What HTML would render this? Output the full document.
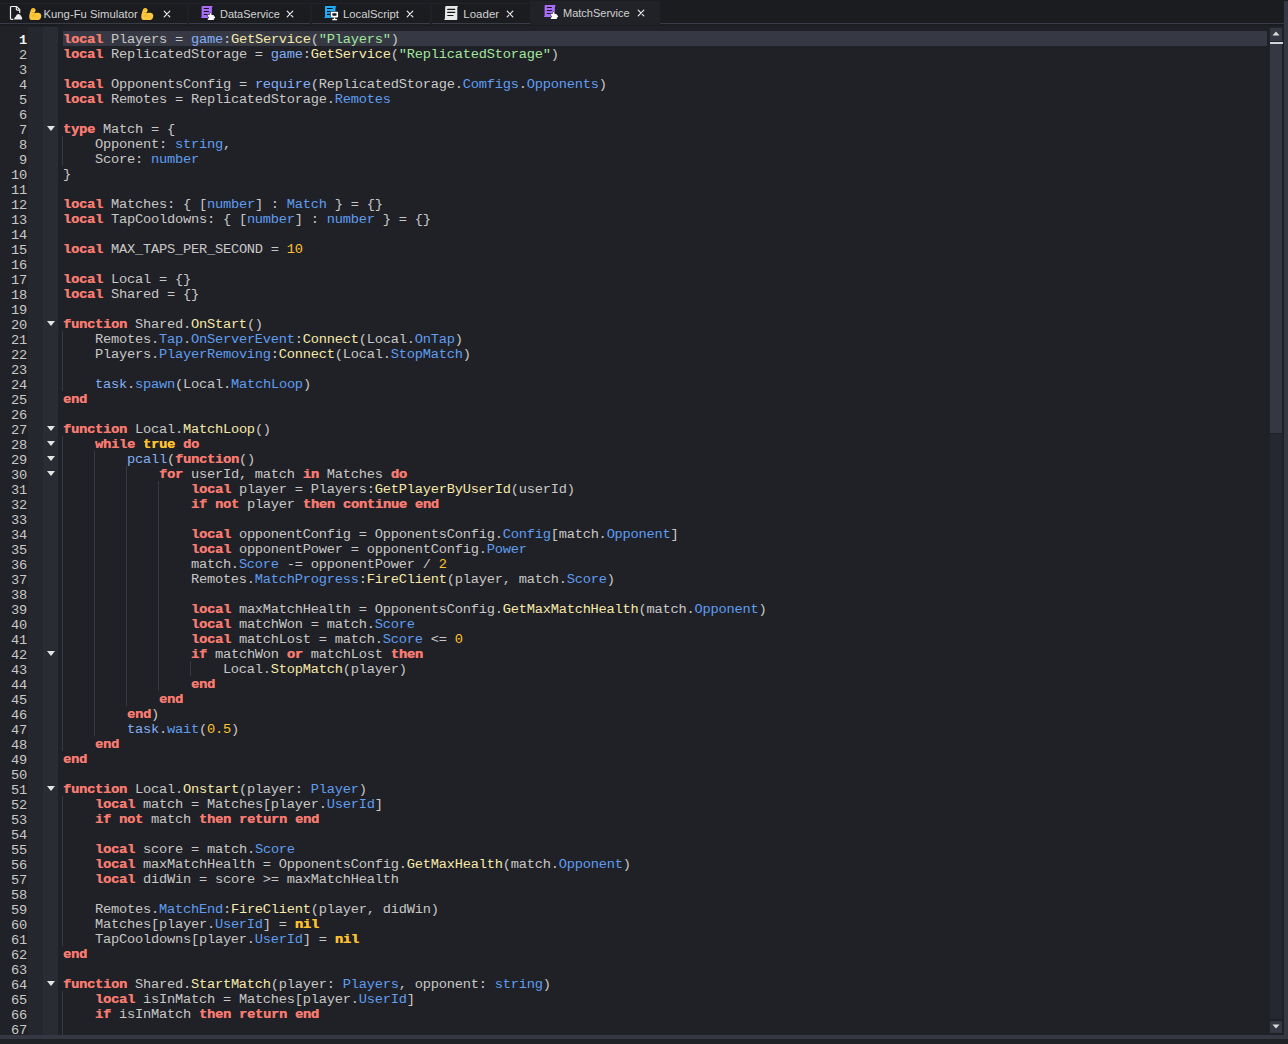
<!DOCTYPE html>
<html><head><meta charset="utf-8">
<style>
*{margin:0;padding:0;box-sizing:border-box}
html,body{width:1288px;height:1044px;overflow:hidden;background:#202126}
body{position:relative;font-family:"Liberation Sans",sans-serif}
#tabs{position:absolute;left:0;top:0;width:1288px;height:24px;background:#1b1c20}
.tab{position:absolute;top:3px;height:21px;border-top:1px solid #222328;border-bottom:1px solid #393b46;background:#1b1c20}
.sep{position:absolute;top:3px;width:2px;height:22px;background:#202127}
.tab.act{top:1px;height:24px;background:#212228;border:none}
.tt{position:absolute;top:4px;font-size:12px;color:#d2d2d2;white-space:nowrap;line-height:14px}
.cl{position:absolute;width:8px;height:8px}
.ic{position:absolute}
#tabline{position:absolute;left:660px;top:23px;width:624px;height:1px;background:#393b46}
#redge{position:absolute;left:1284px;top:1px;width:4px;height:1038px;background:#353842}
#bedge{position:absolute;left:0;top:1035px;width:1288px;height:4px;background:#353842}
#g1{position:absolute;left:0;top:27px;width:28px;height:1008px;background:#212227}
#g2{position:absolute;left:28px;top:27px;width:15px;height:1008px;background:#25272e}
#g3{position:absolute;left:43px;top:27px;width:15px;height:1008px;background:#2a2c33}
#hl{position:absolute;left:63px;top:31px;width:1204px;height:15px;background:#363944}
.num{position:absolute;left:0;width:27px;text-align:right;font-family:"Liberation Mono",monospace;font-size:13.7px;letter-spacing:-0.22px;line-height:15px;color:#c8c8c8}
.num.cur{color:#f2f2f2;font-weight:bold}
.ln{position:absolute;left:63px;font-family:"Liberation Mono",monospace;font-size:13.7px;letter-spacing:-0.22px;line-height:15px;color:#c8c8c8;white-space:pre}
.ln i{font-style:normal}
.kw{color:#f67a70;font-weight:bold;text-shadow:0.35px 0 0 #f67a70}
.bi{color:#84aef7}
.me{color:#f6eaaa}
.pr{color:#5f9df1}
.st{color:#a2e69e}
.nu{color:#fec22e}
.bo{color:#fec22e;font-weight:bold;text-shadow:0.35px 0 0 #fec22e}
.fold{position:absolute;left:46.5px;width:0;height:0;border-left:4px solid transparent;border-right:4px solid transparent;border-top:5px solid #e4e4e4}
.guide{position:absolute;width:1px;background:#383a42}
#sb{position:absolute;left:1270px;top:28px;width:12px;height:1005px}
#sbup{position:absolute;left:0;top:0;width:12px;height:13px;background:#353842}
#sbthumb{position:absolute;left:0;top:14px;width:12px;height:391px;background:#353842}
#sbmark{position:absolute;left:0;top:14px;width:13px;height:2px;background:#d0d3dc}
#sbtrack{position:absolute;left:0;top:406px;width:12px;height:585px;background:#252831}
#sbdn{position:absolute;left:0;top:993px;width:12px;height:12px;background:#353842}
</style></head><body>
<div id="strip" style="position:absolute;left:0;top:24px;width:1284px;height:2px;background:#1b1c20"></div>
<div id="tabs">
  <div class="tab" style="left:0;width:187px"></div>
  <div class="sep" style="left:187px"></div>
  <div class="tab" style="left:189px;width:121px"></div>
  <div class="sep" style="left:310px"></div>
  <div class="tab" style="left:312px;width:118px"></div>
  <div class="sep" style="left:430px"></div>
  <div class="tab" style="left:432px;width:98px"></div>
  <div class="tab act" style="left:530px;width:130px"></div>
  <div id="tabline"></div>

  
  <svg class="ic" style="left:7px;top:3px" width="18" height="18" viewBox="0 0 18 18"><path d="M6.3 16.4 H4.6 Q3.5 16.4 3.5 15.3 V4.6 Q3.5 3.5 4.6 3.5 H9.6 L12.7 6.6 V9.9" fill="none" stroke="#f2f2f2" stroke-width="1.2"/><path d="M9.3 3.7 V5.9 Q9.3 7.1 10.5 7.1 H12.6" fill="none" stroke="#f2f2f2" stroke-width="1.1"/><path d="M7.1 16.5 Q7 14.3 8.6 13.7 Q9.4 11 11.4 11 Q13.5 11 14.1 13.2 Q15.1 13.9 15.1 15.2 V16.5 Z" fill="#ececec"/></svg>
<svg class="ic" style="left:26px;top:5px" width="18" height="18" viewBox="0 0 18 18"><path d="M5.4 3.8 Q6.4 2.8 7.6 3 Q9.4 3.4 9.7 5 Q9.6 6.2 8.6 7.4 L8.2 8.4 Q9 7.8 10.2 7.8 H12.6 Q15 7.9 15.3 10.6 Q15.4 13.2 13.6 14.6 Q12.8 15.1 11.8 15.1 H5.4 Q3.6 15 3.3 12.8 Q3.1 10.6 3.6 9 Q4.2 6.2 5.4 3.8 Z" fill="#fcc93c"/><path d="M6.4 4.4 Q7 4.8 7.6 4.2 M5.8 7.4 Q6.8 8 7.8 7.3 M6.2 11.6 L7.6 10.2 L9 11.6" stroke="#e39a1e" stroke-width="0.8" fill="none"/></svg>
<div class="tt" style="left:43.5px;top:7px;font-size:11.3px;letter-spacing:0px">Kung-Fu Simulator</div>
<svg class="ic" style="left:137.5px;top:5px" width="18" height="18" viewBox="0 0 18 18"><path d="M5.4 3.8 Q6.4 2.8 7.6 3 Q9.4 3.4 9.7 5 Q9.6 6.2 8.6 7.4 L8.2 8.4 Q9 7.8 10.2 7.8 H12.6 Q15 7.9 15.3 10.6 Q15.4 13.2 13.6 14.6 Q12.8 15.1 11.8 15.1 H5.4 Q3.6 15 3.3 12.8 Q3.1 10.6 3.6 9 Q4.2 6.2 5.4 3.8 Z" fill="#fcc93c"/><path d="M6.4 4.4 Q7 4.8 7.6 4.2 M5.8 7.4 Q6.8 8 7.8 7.3 M6.2 11.6 L7.6 10.2 L9 11.6" stroke="#e39a1e" stroke-width="0.8" fill="none"/></svg>
<svg class="ic" style="left:162px;top:9px" width="10" height="10" viewBox="0 0 10 10"><path d="M2.2 2.2 L7.8 7.8 M7.8 2.2 L2.2 7.8" stroke="#ececec" stroke-width="1.2" stroke-linecap="round"/></svg>
<svg class="ic" style="left:198px;top:3px" width="20" height="20" viewBox="0 0 20 20"><path d="M3.6 3.8 Q3.6 2.9 4.6 2.9 H14.9 L13.9 4.6 V14.9 H2.8 L3.6 13.8 Z" fill="#a86cf8"/><path d="M5.8 5.5 H10.9 M5.8 8.45 H10.9 M5.8 11.5 H9.4" stroke="#15161a" stroke-width="1.1"/><path d="M9.8 12 H11.6 Q11.3 10 12.6 10 Q13.9 10 13.6 12 H15.8 V13.4 Q17.1 13.2 17.1 14.4 Q17.1 15.6 15.8 15.4 V17 H9.8 V15.4 Q11 15.5 11 14.4 Q11 13.3 9.8 13.4 Z" fill="#ffffff" stroke="#15161a" stroke-width="1" paint-order="stroke"/></svg>
<div class="tt" style="left:220px;top:7px;font-size:11px;letter-spacing:0px">DataService</div>
<svg class="ic" style="left:285px;top:9px" width="10" height="10" viewBox="0 0 10 10"><path d="M2.2 2.2 L7.8 7.8 M7.8 2.2 L2.2 7.8" stroke="#ececec" stroke-width="1.2" stroke-linecap="round"/></svg>
<svg class="ic" style="left:321px;top:3px" width="20" height="20" viewBox="0 0 20 20"><path d="M4 3.8 Q4 2.9 5 2.9 H15.5 L14.5 4.6 V14.9 H3 L4 13.8 Z" fill="#22a8f5"/><path d="M6 5.5 H11.6 M6 8.45 H9.5 M6 11.4 H9.5" stroke="#15161a" stroke-width="1.1"/><rect x="9.8" y="8.8" width="7.3" height="5.8" rx="1" fill="#fff" stroke="#15161a" stroke-width="1" paint-order="stroke"/><rect x="11.3" y="10.3" width="4.3" height="2.4" rx="0.8" fill="#15161a"/><rect x="12.8" y="14.4" width="1.4" height="2" fill="#fff"/><rect x="11.2" y="16" width="5" height="1.2" rx="0.5" fill="#fff"/></svg>
<div class="tt" style="left:343px;top:7px;font-size:11.3px;letter-spacing:0px">LocalScript</div>
<svg class="ic" style="left:405px;top:9px" width="10" height="10" viewBox="0 0 10 10"><path d="M2.2 2.2 L7.8 7.8 M7.8 2.2 L2.2 7.8" stroke="#ececec" stroke-width="1.2" stroke-linecap="round"/></svg>
<svg class="ic" style="left:441px;top:3px" width="20" height="20" viewBox="0 0 20 20"><path d="M4.2 4 Q4.4 3 5.4 3 H17.1 L16.3 4.6 V16 Q16.3 16.9 15.5 16.9 H3 L3.9 15.8 Z" fill="#e8e8e8"/><path d="M6.7 6.4 H13.8 M6.7 9.4 H13.8 M6.7 12.5 H12" stroke="#15161a" stroke-width="1.1" stroke-linecap="round"/></svg>
<div class="tt" style="left:463.3px;top:7px;font-size:11.5px;letter-spacing:0px">Loader</div>
<svg class="ic" style="left:505px;top:9px" width="10" height="10" viewBox="0 0 10 10"><path d="M2.2 2.2 L7.8 7.8 M7.8 2.2 L2.2 7.8" stroke="#ececec" stroke-width="1.2" stroke-linecap="round"/></svg>
<svg class="ic" style="left:541px;top:2px" width="20" height="20" viewBox="0 0 20 20"><path d="M3.6 3.8 Q3.6 2.9 4.6 2.9 H14.9 L13.9 4.6 V14.9 H2.8 L3.6 13.8 Z" fill="#a86cf8"/><path d="M5.8 5.5 H10.9 M5.8 8.45 H10.9 M5.8 11.5 H9.4" stroke="#15161a" stroke-width="1.1"/><path d="M9.8 12 H11.6 Q11.3 10 12.6 10 Q13.9 10 13.6 12 H15.8 V13.4 Q17.1 13.2 17.1 14.4 Q17.1 15.6 15.8 15.4 V17 H9.8 V15.4 Q11 15.5 11 14.4 Q11 13.3 9.8 13.4 Z" fill="#ffffff" stroke="#15161a" stroke-width="1" paint-order="stroke"/></svg>
<div class="tt" style="left:563px;top:6px;font-size:11px;letter-spacing:0px">MatchService</div>
<svg class="ic" style="left:636px;top:8px" width="10" height="10" viewBox="0 0 10 10"><path d="M2.2 2.2 L7.8 7.8 M7.8 2.2 L2.2 7.8" stroke="#ececec" stroke-width="1.2" stroke-linecap="round"/></svg>
</div>
<div id="g1"></div><div id="g2"></div><div id="g3"></div>
<div id="hl"></div>
<div class="guide" style="left:62px;top:136px;height:30px"></div><div class="guide" style="left:62px;top:331px;height:60px"></div><div class="guide" style="left:62px;top:436px;height:315px"></div><div class="guide" style="left:94px;top:451px;height:285px"></div><div class="guide" style="left:126px;top:466px;height:240px"></div><div class="guide" style="left:158px;top:481px;height:210px"></div><div class="guide" style="left:190px;top:661px;height:15px"></div><div class="guide" style="left:62px;top:796px;height:150px"></div><div class="guide" style="left:62px;top:991px;height:45px"></div>
<div class="num cur" style="top:33px">1</div>
<div class="num" style="top:48px">2</div>
<div class="num" style="top:63px">3</div>
<div class="num" style="top:78px">4</div>
<div class="num" style="top:93px">5</div>
<div class="num" style="top:108px">6</div>
<div class="num" style="top:123px">7</div>
<div class="num" style="top:138px">8</div>
<div class="num" style="top:153px">9</div>
<div class="num" style="top:168px">10</div>
<div class="num" style="top:183px">11</div>
<div class="num" style="top:198px">12</div>
<div class="num" style="top:213px">13</div>
<div class="num" style="top:228px">14</div>
<div class="num" style="top:243px">15</div>
<div class="num" style="top:258px">16</div>
<div class="num" style="top:273px">17</div>
<div class="num" style="top:288px">18</div>
<div class="num" style="top:303px">19</div>
<div class="num" style="top:318px">20</div>
<div class="num" style="top:333px">21</div>
<div class="num" style="top:348px">22</div>
<div class="num" style="top:363px">23</div>
<div class="num" style="top:378px">24</div>
<div class="num" style="top:393px">25</div>
<div class="num" style="top:408px">26</div>
<div class="num" style="top:423px">27</div>
<div class="num" style="top:438px">28</div>
<div class="num" style="top:453px">29</div>
<div class="num" style="top:468px">30</div>
<div class="num" style="top:483px">31</div>
<div class="num" style="top:498px">32</div>
<div class="num" style="top:513px">33</div>
<div class="num" style="top:528px">34</div>
<div class="num" style="top:543px">35</div>
<div class="num" style="top:558px">36</div>
<div class="num" style="top:573px">37</div>
<div class="num" style="top:588px">38</div>
<div class="num" style="top:603px">39</div>
<div class="num" style="top:618px">40</div>
<div class="num" style="top:633px">41</div>
<div class="num" style="top:648px">42</div>
<div class="num" style="top:663px">43</div>
<div class="num" style="top:678px">44</div>
<div class="num" style="top:693px">45</div>
<div class="num" style="top:708px">46</div>
<div class="num" style="top:723px">47</div>
<div class="num" style="top:738px">48</div>
<div class="num" style="top:753px">49</div>
<div class="num" style="top:768px">50</div>
<div class="num" style="top:783px">51</div>
<div class="num" style="top:798px">52</div>
<div class="num" style="top:813px">53</div>
<div class="num" style="top:828px">54</div>
<div class="num" style="top:843px">55</div>
<div class="num" style="top:858px">56</div>
<div class="num" style="top:873px">57</div>
<div class="num" style="top:888px">58</div>
<div class="num" style="top:903px">59</div>
<div class="num" style="top:918px">60</div>
<div class="num" style="top:933px">61</div>
<div class="num" style="top:948px">62</div>
<div class="num" style="top:963px">63</div>
<div class="num" style="top:978px">64</div>
<div class="num" style="top:993px">65</div>
<div class="num" style="top:1008px">66</div>
<div class="num" style="top:1023px">67</div>
<div class="fold" style="top:126px"></div><div class="fold" style="top:321px"></div><div class="fold" style="top:426px"></div><div class="fold" style="top:441px"></div><div class="fold" style="top:456px"></div><div class="fold" style="top:471px"></div><div class="fold" style="top:651px"></div><div class="fold" style="top:786px"></div><div class="fold" style="top:981px"></div>
<div class="ln" style="top:32px"><i class="kw">local</i> Players = <i class="bi">game</i>:<i class="me">GetService</i>(<i class="st">&quot;Players&quot;</i>)</div>
<div class="ln" style="top:47px"><i class="kw">local</i> ReplicatedStorage = <i class="bi">game</i>:<i class="me">GetService</i>(<i class="st">&quot;ReplicatedStorage&quot;</i>)</div>
<div class="ln" style="top:62px">&#8203;</div>
<div class="ln" style="top:77px"><i class="kw">local</i> OpponentsConfig = <i class="bi">require</i>(ReplicatedStorage.<i class="pr">Comfigs</i>.<i class="pr">Opponents</i>)</div>
<div class="ln" style="top:92px"><i class="kw">local</i> Remotes = ReplicatedStorage.<i class="pr">Remotes</i></div>
<div class="ln" style="top:107px">&#8203;</div>
<div class="ln" style="top:122px"><i class="kw">type</i> Match = {</div>
<div class="ln" style="top:137px">    Opponent: <i class="pr">string</i>,</div>
<div class="ln" style="top:152px">    Score: <i class="pr">number</i></div>
<div class="ln" style="top:167px">}</div>
<div class="ln" style="top:182px">&#8203;</div>
<div class="ln" style="top:197px"><i class="kw">local</i> Matches: { [<i class="pr">number</i>] : <i class="pr">Match</i> } = {}</div>
<div class="ln" style="top:212px"><i class="kw">local</i> TapCooldowns: { [<i class="pr">number</i>] : <i class="pr">number</i> } = {}</div>
<div class="ln" style="top:227px">&#8203;</div>
<div class="ln" style="top:242px"><i class="kw">local</i> MAX_TAPS_PER_SECOND = <i class="nu">10</i></div>
<div class="ln" style="top:257px">&#8203;</div>
<div class="ln" style="top:272px"><i class="kw">local</i> Local = {}</div>
<div class="ln" style="top:287px"><i class="kw">local</i> Shared = {}</div>
<div class="ln" style="top:302px">&#8203;</div>
<div class="ln" style="top:317px"><i class="kw">function</i> Shared.<i class="me">OnStart</i>()</div>
<div class="ln" style="top:332px">    Remotes.<i class="pr">Tap</i>.<i class="pr">OnServerEvent</i>:<i class="me">Connect</i>(Local.<i class="pr">OnTap</i>)</div>
<div class="ln" style="top:347px">    Players.<i class="pr">PlayerRemoving</i>:<i class="me">Connect</i>(Local.<i class="pr">StopMatch</i>)</div>
<div class="ln" style="top:362px">&#8203;</div>
<div class="ln" style="top:377px">    <i class="bi">task</i>.<i class="pr">spawn</i>(Local.<i class="pr">MatchLoop</i>)</div>
<div class="ln" style="top:392px"><i class="kw">end</i></div>
<div class="ln" style="top:407px">&#8203;</div>
<div class="ln" style="top:422px"><i class="kw">function</i> Local.<i class="me">MatchLoop</i>()</div>
<div class="ln" style="top:437px">    <i class="kw">while</i> <i class="bo">true</i> <i class="kw">do</i></div>
<div class="ln" style="top:452px">        <i class="bi">pcall</i>(<i class="kw">function</i>()</div>
<div class="ln" style="top:467px">            <i class="kw">for</i> userId, match <i class="kw">in</i> Matches <i class="kw">do</i></div>
<div class="ln" style="top:482px">                <i class="kw">local</i> player = Players:<i class="me">GetPlayerByUserId</i>(userId)</div>
<div class="ln" style="top:497px">                <i class="kw">if</i> <i class="kw">not</i> player <i class="kw">then</i> <i class="kw">continue</i> <i class="kw">end</i></div>
<div class="ln" style="top:512px">&#8203;</div>
<div class="ln" style="top:527px">                <i class="kw">local</i> opponentConfig = OpponentsConfig.<i class="pr">Config</i>[match.<i class="pr">Opponent</i>]</div>
<div class="ln" style="top:542px">                <i class="kw">local</i> opponentPower = opponentConfig.<i class="pr">Power</i></div>
<div class="ln" style="top:557px">                match.<i class="pr">Score</i> -= opponentPower / <i class="nu">2</i></div>
<div class="ln" style="top:572px">                Remotes.<i class="pr">MatchProgress</i>:<i class="me">FireClient</i>(player, match.<i class="pr">Score</i>)</div>
<div class="ln" style="top:587px">&#8203;</div>
<div class="ln" style="top:602px">                <i class="kw">local</i> maxMatchHealth = OpponentsConfig.<i class="me">GetMaxMatchHealth</i>(match.<i class="pr">Opponent</i>)</div>
<div class="ln" style="top:617px">                <i class="kw">local</i> matchWon = match.<i class="pr">Score</i></div>
<div class="ln" style="top:632px">                <i class="kw">local</i> matchLost = match.<i class="pr">Score</i> &lt;= <i class="nu">0</i></div>
<div class="ln" style="top:647px">                <i class="kw">if</i> matchWon <i class="kw">or</i> matchLost <i class="kw">then</i></div>
<div class="ln" style="top:662px">                    Local.<i class="me">StopMatch</i>(player)</div>
<div class="ln" style="top:677px">                <i class="kw">end</i></div>
<div class="ln" style="top:692px">            <i class="kw">end</i></div>
<div class="ln" style="top:707px">        <i class="kw">end</i>)</div>
<div class="ln" style="top:722px">        <i class="bi">task</i>.<i class="pr">wait</i>(<i class="nu">0.5</i>)</div>
<div class="ln" style="top:737px">    <i class="kw">end</i></div>
<div class="ln" style="top:752px"><i class="kw">end</i></div>
<div class="ln" style="top:767px">&#8203;</div>
<div class="ln" style="top:782px"><i class="kw">function</i> Local.<i class="me">Onstart</i>(player: <i class="pr">Player</i>)</div>
<div class="ln" style="top:797px">    <i class="kw">local</i> match = Matches[player.<i class="pr">UserId</i>]</div>
<div class="ln" style="top:812px">    <i class="kw">if</i> <i class="kw">not</i> match <i class="kw">then</i> <i class="kw">return</i> <i class="kw">end</i></div>
<div class="ln" style="top:827px">&#8203;</div>
<div class="ln" style="top:842px">    <i class="kw">local</i> score = match.<i class="pr">Score</i></div>
<div class="ln" style="top:857px">    <i class="kw">local</i> maxMatchHealth = OpponentsConfig.<i class="me">GetMaxHealth</i>(match.<i class="pr">Opponent</i>)</div>
<div class="ln" style="top:872px">    <i class="kw">local</i> didWin = score &gt;= maxMatchHealth</div>
<div class="ln" style="top:887px">&#8203;</div>
<div class="ln" style="top:902px">    Remotes.<i class="pr">MatchEnd</i>:<i class="me">FireClient</i>(player, didWin)</div>
<div class="ln" style="top:917px">    Matches[player.<i class="pr">UserId</i>] = <i class="bo">nil</i></div>
<div class="ln" style="top:932px">    TapCooldowns[player.<i class="pr">UserId</i>] = <i class="bo">nil</i></div>
<div class="ln" style="top:947px"><i class="kw">end</i></div>
<div class="ln" style="top:962px">&#8203;</div>
<div class="ln" style="top:977px"><i class="kw">function</i> Shared.<i class="me">StartMatch</i>(player: <i class="pr">Players</i>, opponent: <i class="pr">string</i>)</div>
<div class="ln" style="top:992px">    <i class="kw">local</i> isInMatch = Matches[player.<i class="pr">UserId</i>]</div>
<div class="ln" style="top:1007px">    <i class="kw">if</i> isInMatch <i class="kw">then</i> <i class="kw">return</i> <i class="kw">end</i></div>
<div class="ln" style="top:1022px">&#8203;</div>
<div id="sb"><div id="sbup"></div><div id="sbthumb"></div><div id="sbmark"></div><div id="sbtrack"></div><div id="sbdn"></div>
<svg style="position:absolute;left:2px;top:3px" width="8" height="5" viewBox="0 0 8 5"><path d="M4 0.5 L7.5 4.5 H0.5 Z" fill="#dcdcdc"/></svg>
<svg style="position:absolute;left:2px;top:996px" width="8" height="5" viewBox="0 0 8 5"><path d="M4 4.5 L7.5 0.5 H0.5 Z" fill="#dcdcdc"/></svg>
</div>
<div id="redge"></div>
<div id="bedge"></div>
</body></html>
